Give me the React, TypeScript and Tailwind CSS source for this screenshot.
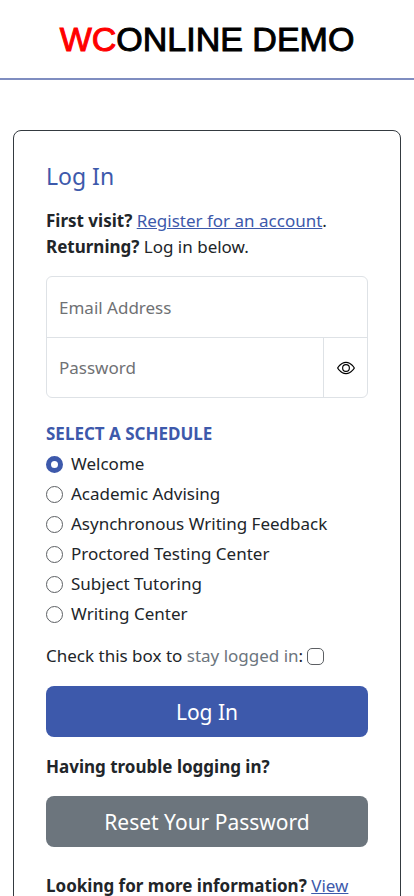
import { useState } from "react";
import { BsEye } from "react-icons/bs";

const schedules = [
  "Welcome",
  "Academic Advising",
  "Asynchronous Writing Feedback",
  "Proctored Testing Center",
  "Subject Tutoring",
  "Writing Center",
];

export default function App() {
  const [selected, setSelected] = useState("Welcome");
  const [visible, setVisible] = useState(false);

  return (
    <div className="bg-white font-['Noto_Sans',sans-serif] text-[17px] leading-[26px] text-[#212529]">
      <header className="flex h-20 items-center justify-center border-b-2 border-[#7f8dc0]">
        <div className="font-['Liberation_Sans',Arial,sans-serif] text-[34px] leading-10 text-black [-webkit-text-stroke:1px]">
          <span className="text-[#ff0000]">WC</span>ONLINE DEMO
        </div>
      </header>

      <main className="px-[13px] pt-[50px]">
        <section className="rounded-lg border border-[#343a40] px-8 pt-[31px] pb-8">
          <h1 className="text-[23px] leading-7 text-[#3d59ab]">Log In</h1>
          <p className="mt-[18px]">
            <b>First visit?</b>{" "}
            <a href="#register" className="text-[#3d59ab] underline">
              Register for an account
            </a>
            .
            <br />
            <b>Returning?</b> Log in below.
          </p>

          <form onSubmit={(e) => e.preventDefault()}>
            <div className="mt-4 rounded-md border border-[#dee2e6]">
              <input
                type="email"
                aria-label="Email Address"
                placeholder="Email Address"
                className="block h-[60px] w-full rounded-t-md px-3 outline-none placeholder:text-[#6f7174]"
              />
              <div className="flex h-[60px] border-t border-[#dee2e6]">
                <input
                  type={visible ? "text" : "password"}
                  aria-label="Password"
                  placeholder="Password"
                  className="block min-w-0 flex-1 rounded-bl-md px-3 outline-none placeholder:text-[#6f7174]"
                />
                <button
                  type="button"
                  aria-label="Show password"
                  onClick={() => setVisible(!visible)}
                  className="flex w-11 items-center justify-center border-l border-[#dee2e6] text-black"
                >
                  <BsEye size={18} />
                </button>
              </div>
            </div>

            <fieldset className="mt-[23px]">
              <legend className="font-bold text-[#3d59ab]">SELECT A SCHEDULE</legend>
              <div className="mt-1 flex flex-col gap-1">
                {schedules.map((name) => (
                  <label key={name} className="flex items-center gap-2">
                    <input
                      type="radio"
                      name="schedule"
                      checked={selected === name}
                      onChange={() => setSelected(name)}
                      className="size-[17px] appearance-none rounded-full border border-[#5c5f63] bg-white checked:border-5 checked:border-[#3d59ab]"
                    />
                    {name}
                  </label>
                ))}
              </div>
            </fieldset>

            <label className="mt-4 flex items-center">
              <span>
                Check this box to <span className="text-[#6c757d]">stay logged in</span>:
              </span>
              <input
                type="checkbox"
                className="ml-1 size-[17px] appearance-none rounded-[5px] border border-[#5c5f63] bg-white checked:bg-[#3d59ab]"
              />
            </label>

            <button
              type="submit"
              className="mt-[17px] block h-[51px] w-full rounded-lg bg-[#3d59ab] text-[21px] text-white"
            >
              Log In
            </button>
          </form>

          <p className="mt-[17px] font-bold">Having trouble logging in?</p>
          <button
            type="button"
            className="mt-4 block h-[51px] w-full rounded-lg bg-[#6c757d] text-[21px] text-white"
          >
            Reset Your Password
          </button>
          <p className="mt-[26px]">
            <b>Looking for more information?</b>{" "}
            <a href="#help" className="text-[#3d59ab] underline">
              View
            </a>
          </p>
        </section>
      </main>
    </div>
  );
}
